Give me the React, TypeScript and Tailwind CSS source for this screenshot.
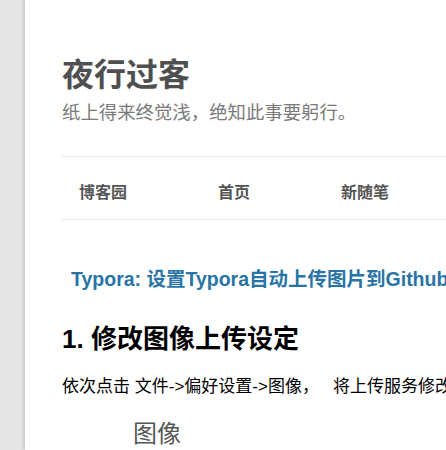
export default function App () {
  return (
    <div className="min-h-screen w-full overflow-hidden bg-[#e6e6e6] font-['Liberation_Sans','Noto_Sans_CJK_SC',sans-serif]">
      <div className="ml-[25px] min-h-[450px] w-[900px] bg-white pl-[37px] pt-[55px] shadow-[-2px_0_3px_rgba(0,0,0,0.12)]">
        <header>
          <h1 className="text-[32px] leading-[40px] font-bold text-[#4f4f4f]">夜行过客</h1>
          <p className="mt-[6px] text-[18.4px] leading-[24px] text-[#7a7a7a] whitespace-nowrap">纸上得来终觉浅，绝知此事要躬行。</p>
        </header>

        <nav className="mt-[31px] border-y border-[#ebebeb] pl-[17px] pt-[24px] pb-[14px]">
          <ul className="flex gap-[91px] text-[16px] leading-[24px] font-bold text-[#555]">
            <li>博客园</li>
            <li>首页</li>
            <li>新随笔</li>
          </ul>
        </nav>

        <article>
          <h2 className="mt-[45px] ml-[9px] whitespace-nowrap text-[19.5px] leading-[28px] font-bold text-[#2874a6]">
            Typora: 设置Typora自动上传图片到Github
          </h2>
          <h3 className="mt-[29px] text-[26px] leading-[34px] font-bold text-black whitespace-nowrap">1. 修改图像上传设定</h3>
          <p className="mt-[19px] text-[17px] leading-[24px] text-black whitespace-pre">
            依次点击 文件-&gt;偏好设置-&gt;图像，   将上传服务修改为PicGo-Core
          </p>
          <p className="mt-[19px] ml-[71px] text-[24px] leading-[32px] text-[#555]">图像</p>
        </article>
      </div>
    </div>
  )
}
